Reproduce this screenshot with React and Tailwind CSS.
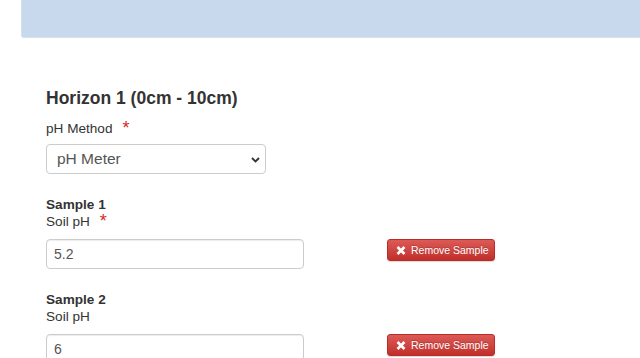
import React from "react";

const font = { fontFamily: '"Liberation Sans", Arial, sans-serif' };

function Asterisk() {
  return (
    <span className="ml-[10px] h-[17px] overflow-visible text-[18px] leading-[17px] text-[#d42a2a]">*</span>
  );
}

function RemoveButton() {
  return (
    <button
      type="button"
      className="ml-[83px] flex h-[22px] w-[108px] items-center rounded-[3px] border border-[#b92c28] bg-gradient-to-b from-[#dc5a56] to-[#c12e2a] pl-[8px] text-[10.5px] leading-none text-white shadow-[0_1px_1px_rgba(0,0,0,0.15)]"
    >
      <svg width="10" height="9" viewBox="0 0 10 9" className="mr-[5px]">
        <path d="M1.5 1 L8.5 8 M8.5 1 L1.5 8" stroke="#fff" strokeWidth="2.6" strokeLinecap="butt" />
      </svg>
      <span className="[text-shadow:0_-1px_0_rgba(0,0,0,0.2)]">Remove Sample</span>
    </button>
  );
}

function Sample({ n, value, required, mt }) {
  return (
    <div className={mt}>
      <div className="text-[13.6px] font-bold leading-[17px] text-[#333]">Sample {n}</div>
      <div className="flex items-start text-[13.6px] leading-[17px] text-[#333]">
        <span>Soil pH</span>
        {required && <Asterisk />}
      </div>
      <div className="mt-[9px] flex items-start">
        <input
          readOnly
          value={value}
          className="h-[30px] w-[258px] rounded-[4px] border border-[#ccc] px-[7px] text-[14px] text-[#555] shadow-[inset_0_1px_1px_rgba(0,0,0,0.075)] outline-none"
        />
        <RemoveButton />
      </div>
    </div>
  );
}

export default function App() {
  return (
    <div className="h-[358px] w-[640px] overflow-hidden bg-white" style={font}>
      <div className="ml-[21px] h-[38px] rounded-bl-[3px] border-b border-l border-[#d6e1ef] bg-[#c8d9ee]" />
      <div className="pl-[46px]">
        <h4 className="mt-[50px] text-[17.5px] font-bold leading-[20px] text-[#333]">
          Horizon 1 (0cm - 10cm)
        </h4>
        <div className="mt-[12px] flex items-start text-[13.6px] leading-[17px] text-[#333]">
          <span>pH Method</span>
          <Asterisk />
        </div>
        <div className="relative mt-[7px] w-[220px]">
          <select
            className="h-[30px] w-[220px] appearance-none rounded-[4px] border border-[#ccc] bg-white pl-[10px] text-[15.5px] text-[#555] outline-none"
            defaultValue="pH Meter"
          >
            <option>pH Meter</option>
          </select>
          <svg
            width="9"
            height="6"
            viewBox="0 0 9 6"
            className="pointer-events-none absolute left-[205px] top-[13px]"
          >
            <path d="M1 1 L4.5 4.5 L8 1" stroke="#333" strokeWidth="1.9" fill="none" />
          </svg>
        </div>
        <Sample n={1} value="5.2" required mt="mt-[22px]" />
        <Sample n={2} value="6" mt="mt-[22px]" />
      </div>
    </div>
  );
}
